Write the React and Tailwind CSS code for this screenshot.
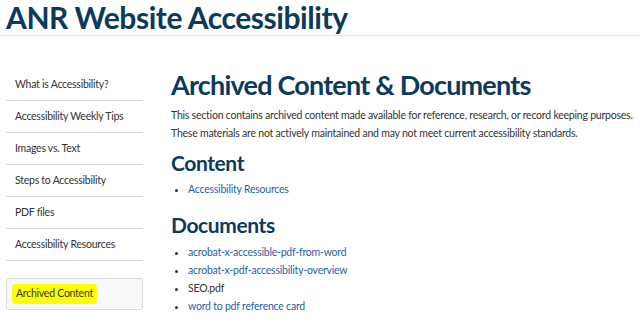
export default function App() {
  const nav = [
    "What is Accessibility?",
    "Accessibility Weekly Tips",
    "Images vs. Text",
    "Steps to Accessibility",
    "PDF files",
    "Accessibility Resources",
  ];
  return (
    <div className="w-[640px] h-[324px] bg-white overflow-hidden font-['Lato',sans-serif]">
      <header className="h-[36px] border-b border-[#e6e6e6] shadow-[0_1px_1px_rgba(0,0,0,0.04)] px-[6px]">
        <h1 className="text-[30px] leading-[34px] font-bold text-[#0b3a5c] tracking-[-0.45px]">ANR Website Accessibility</h1>
      </header>
      <div className="flex pt-[33px]">
        <nav className="w-[137px] ml-[6px] flex flex-col">
          {nav.map((n) => (
            <div key={n} className="h-[32px] border-b border-[#d9d9d9] flex items-center pl-[9px] text-[10.5px] tracking-[-0.25px] text-[#333]">
              {n}
            </div>
          ))}
          <div className="mt-[17px] h-[32px] border border-[#dcdcdc] rounded-[2px] bg-[#f8f9fa] flex items-center pl-[5px]">
            <span className="text-[10.5px] tracking-[-0.25px] text-[#333] bg-[#ffff00] rounded-[4px] px-[4px] py-[2px]">Archived Content</span>
          </div>
        </nav>
        <main className="ml-[28px] flex-1">
          <h2 className="text-[27px] leading-[36px] font-bold text-[#0b3a5c] tracking-[-0.8px] -mt-[2px]">Archived Content &amp; Documents</h2>
          <p className="text-[10.5px] leading-[18px] tracking-[-0.22px] text-[#333] mt-[3px] whitespace-nowrap">
            This section contains archived content made available for reference, research, or record keeping purposes.
            <br />
            These materials are not actively maintained and may not meet current accessibility standards.
          </p>
          <h3 className="text-[21px] leading-[26px] font-bold text-[#0b3a5c] tracking-[-0.4px] mt-[8px]">Content</h3>
          <ul className="list-disc pl-[17px] mt-[4px] text-[10.5px] leading-[18px] tracking-[-0.22px] text-[#1f5fa8] marker:text-[#333]">
            <li>Accessibility Resources</li>
          </ul>
          <h3 className="text-[21px] leading-[26px] font-bold text-[#0b3a5c] tracking-[-0.4px] mt-[14px]">Documents</h3>
          <ul className="list-disc pl-[17px] mt-[5px] text-[10.5px] leading-[18px] tracking-[-0.22px] text-[#1f5fa8] marker:text-[#333]">
            <li>acrobat-x-accessible-pdf-from-word</li>
            <li>acrobat-x-pdf-accessibility-overview</li>
            <li className="text-[#333]">SEO.pdf</li>
            <li>word to pdf reference card</li>
          </ul>
        </main>
      </div>
    </div>
  );
}
